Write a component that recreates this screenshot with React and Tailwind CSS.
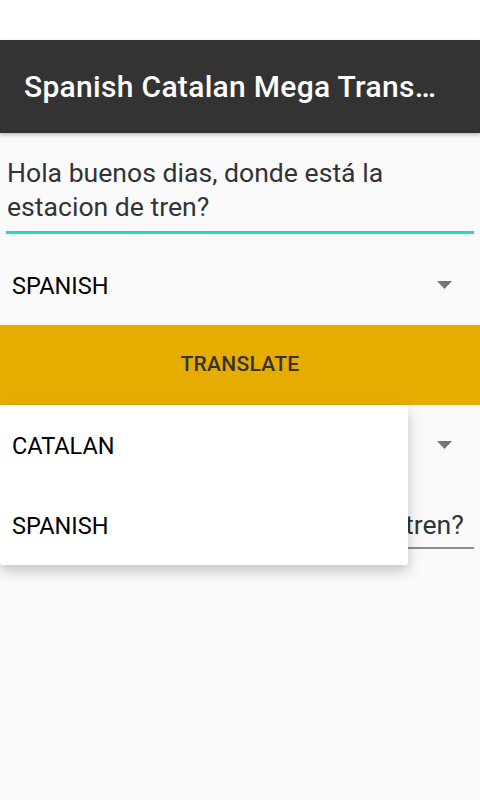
import React from 'react';

// Dropdown arrow used by the Android-style spinners
function SpinnerArrow() {
    return (
        <svg width="15" height="8" viewBox="0 0 15 8" className="shrink-0">
            <path d="M0 0 L15 0 L7.5 8 Z" fill="#757575" />
        </svg>
    );
}

function Spinner({ label }) {
    return (
        <div className="flex h-[80px] items-center justify-between pl-3 pr-[28px]">
            <span className="pt-[4px] text-[23.5px] text-black">{label}</span>
            <SpinnerArrow />
        </div>
    );
}

export default function App() {
    const languages = ['CATALAN', 'SPANISH'];

    return (
        <div className="relative flex h-[800px] w-[480px] flex-col overflow-hidden bg-[#fafafa]" style={{ fontFamily: 'Roboto, "Noto Sans", sans-serif' }}>
            {/* Status bar */}
            <div className="h-[40px] bg-white" />

            {/* Toolbar */}
            <div className="relative z-10 flex h-[93px] items-center bg-[#333333] pl-6 pr-[40px] shadow-[0_2px_4px_rgba(0,0,0,0.25)]">
                <h1 className="truncate text-[30px] font-medium tracking-[0.3px] text-white">Spanish Catalan Mega Translator</h1>
            </div>

            {/* Input text */}
            <div className="px-[6px] pt-[23px]">
                <p className="pl-px text-[26.6px] leading-[34px] text-[#333333]">Hola buenos dias, donde está la estacion de tren?</p>
                <div className="mt-[7px] h-[3px] bg-[#1ed9c6]" />
            </div>

            {/* Source language */}
            <div className="mt-[11px]">
                <Spinner label="SPANISH" />
            </div>

            {/* Translate button */}
            <button className="flex h-[80px] w-full items-center justify-center bg-[#e6ac00] text-[21px] font-medium tracking-[0.3px] text-[#333333]">
                TRANSLATE
            </button>

            {/* Target language */}
            <div className="flex h-[80px] items-center justify-end pr-[28px]">
                <SpinnerArrow />
            </div>

            {/* Output text */}
            <div className="px-[6px]">
                <p className="overflow-hidden pl-px pt-[23px] text-[26.6px] leading-[34px] whitespace-nowrap text-[#333333]">Hola bons dies, on és l'estació de tren?</p>
                <div className="mt-[5px] h-[2px] bg-[#8a8a8a]" />
            </div>

            {/* Open dropdown menu */}
            <div className="absolute left-0 top-[405px] z-20 w-[408px] rounded-[3px] bg-white shadow-[0_6px_14px_rgba(0,0,0,0.22)]">
                {languages.map((lang) => (
                    <div key={lang} className="flex h-[80px] items-center pl-3 pt-[3px] text-[23.5px] text-black">
                        {lang}
                    </div>
                ))}
            </div>
        </div>
    );
}
